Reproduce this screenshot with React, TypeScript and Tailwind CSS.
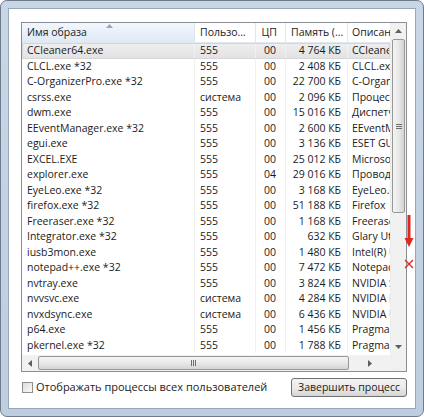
type Row = { name: string; user: string; cpu: string; mem: string; desc: string }

const ROWS: Row[] = [
  { name: 'CCleaner64.exe', user: '555', cpu: '00', mem: '4 764 КБ', desc: 'CCleaner' },
  { name: 'CLCL.exe *32', user: '555', cpu: '00', mem: '2 408 КБ', desc: 'CLCL.exe' },
  { name: 'C-OrganizerPro.exe *32', user: '555', cpu: '00', mem: '22 700 КБ', desc: 'C-Organizer Pro' },
  { name: 'csrss.exe', user: 'система', cpu: '00', mem: '2 096 КБ', desc: 'Процесс исполнения' },
  { name: 'dwm.exe', user: '555', cpu: '00', mem: '15 016 КБ', desc: 'Диспетчер окон' },
  { name: 'EEventManager.exe *32', user: '555', cpu: '00', mem: '2 600 КБ', desc: 'EEventManager' },
  { name: 'egui.exe', user: '555', cpu: '00', mem: '3 136 КБ', desc: 'ESET GUI' },
  { name: 'EXCEL.EXE', user: '555', cpu: '00', mem: '25 012 КБ', desc: 'Microsoft Excel' },
  { name: 'explorer.exe', user: '555', cpu: '04', mem: '29 016 КБ', desc: 'Проводник' },
  { name: 'EyeLeo.exe *32', user: '555', cpu: '00', mem: '3 168 КБ', desc: 'EyeLeo.exe' },
  { name: 'firefox.exe *32', user: '555', cpu: '00', mem: '51 188 КБ', desc: 'Firefox' },
  { name: 'Freeraser.exe *32', user: '555', cpu: '00', mem: '1 168 КБ', desc: 'Freeraser' },
  { name: 'Integrator.exe *32', user: '555', cpu: '00', mem: '632 КБ', desc: 'Glary Utilities' },
  { name: 'iusb3mon.exe', user: '555', cpu: '00', mem: '1 480 КБ', desc: 'Intel(R) USB 3.0' },
  { name: 'notepad++.exe *32', user: '555', cpu: '00', mem: '7 472 КБ', desc: 'Notepad++' },
  { name: 'nvtray.exe', user: '555', cpu: '00', mem: '3 824 КБ', desc: 'NVIDIA Settings' },
  { name: 'nvvsvc.exe', user: 'система', cpu: '00', mem: '4 284 КБ', desc: 'NVIDIA Driver' },
  { name: 'nvxdsync.exe', user: 'система', cpu: '00', mem: '6 436 КБ', desc: 'NVIDIA User' },
  { name: 'p64.exe', user: '555', cpu: '00', mem: '1 456 КБ', desc: 'Pragma' },
  { name: 'pkernel.exe *32', user: '555', cpu: '00', mem: '1 788 КБ', desc: 'Pragma' },
]

// column widths: name, user, cpu, mem, desc
const COLS = 'grid grid-cols-[173px_61px_30px_62px_42px]'

function Grip({ vertical }: { vertical?: boolean }) {
  return (
    <div className={vertical ? 'flex flex-col gap-[1px]' : 'flex gap-[1px]'}>
      {[0, 1, 2].map(i => (
        <span key={i} className={vertical ? 'block w-[6px] h-[1px] bg-[#6f6f6f]' : 'block w-[1px] h-[6px] bg-[#6f6f6f]'} />
      ))}
    </div>
  )
}

function Tri({ dir }: { dir: 'left' | 'right' | 'up' | 'down' }) {
  const d = {
    left: 'M4 0 L0 3.5 L4 7 Z',
    right: 'M0 0 L4 3.5 L0 7 Z',
    up: 'M0 4 L3.5 0 L7 4 Z',
    down: 'M0 0 L3.5 4 L7 0 Z',
  }[dir]
  const horiz = dir === 'left' || dir === 'right'
  return (
    <svg width={horiz ? 4 : 7} height={horiz ? 7 : 4} viewBox={horiz ? '0 0 4 7' : '0 0 7 4'}>
      <path d={d} fill="#5f5f5f" />
    </svg>
  )
}

export default function App() {
  return (
    <div className="w-[424px] h-[417px] bg-white" style={{ fontFamily: '"Open Sans", "Noto Sans", sans-serif' }}>
      <div className="relative w-[424px] h-[417px] rounded-[7px] border border-[#6d7b8c] bg-gradient-to-b from-[#c8d6e6] to-[#bfcedf] p-[7px]">
        <div className="h-full bg-white border border-[#97a6b8] pl-[12px] pr-[7px] pt-[13px] text-[10.5px] text-[#1b1b1b]">
          {/* list view */}
          <div className="w-[386px] h-[350px] border border-[#8a8f96] flex flex-col">
            <div className="flex flex-1 min-h-0">
              <div className="flex-1 min-w-0 overflow-hidden">
                {/* header */}
                <div className={`${COLS} h-[20px] border-b border-[#e3e8ee]`}>
                  <div className="relative flex items-center pl-[5px] bg-gradient-to-b from-[#f2f7fc] to-[#dfeaf6] border-r border-[#dbe3ec]">
                    Имя образа
                    <svg className="absolute left-[84px] top-[1px]" width="7" height="4" viewBox="0 0 7 4">
                      <path d="M0 4 L3.5 0 L7 4 Z" fill="#97a7bb" />
                    </svg>
                  </div>
                  <div className="flex items-center pl-[5px] border-r border-[#e5e5e5] whitespace-nowrap overflow-hidden">Пользо...</div>
                  <div className="flex items-center justify-end pr-[8px] border-r border-[#e5e5e5]">ЦП</div>
                  <div className="flex items-center pl-[5px] border-r border-[#e5e5e5] whitespace-nowrap overflow-hidden">Память (...</div>
                  <div className="flex items-center pl-[4px] whitespace-nowrap overflow-hidden">Описание</div>
                </div>
                {ROWS.map((r, i) => (
                  <div
                    key={r.name}
                    className={`${COLS} h-[15.5px] leading-[15px] ${i === 0 ? 'bg-gradient-to-b from-[#efefef] to-[#e2e2e2] outline outline-1 -outline-offset-1 outline-[#d6d6d6]' : ''}`}
                  >
                    <div className="pl-[5px] whitespace-nowrap overflow-hidden border-r border-[#f0f0f0]">{r.name}</div>
                    <div className="pl-[5px] whitespace-nowrap overflow-hidden border-r border-[#f0f0f0]">{r.user}</div>
                    <div className="text-right pr-[9px] border-r border-[#f0f0f0]">{r.cpu}</div>
                    <div className="text-right pr-[6px] whitespace-nowrap border-r border-[#f0f0f0]">{r.mem}</div>
                    <div className="pl-[4px] whitespace-nowrap overflow-hidden">{r.desc}</div>
                  </div>
                ))}
              </div>
              {/* vertical scrollbar */}
              <div className="w-[16px] flex flex-col bg-[#f1f1f1] border-l border-[#ececec]">
                <div className="h-[16px] flex items-center justify-center">
                  <Tri dir="up" />
                </div>
                <div className="h-[174px] mx-[1px] rounded-[2px] border border-[#979797] bg-gradient-to-r from-[#f4f4f4] via-[#e8e8e8] to-[#d4d4d4] flex items-center justify-center">
                  <Grip vertical />
                </div>
                <div className="flex-1" />
                <div className="h-[16px] flex items-center justify-center">
                  <Tri dir="down" />
                </div>
              </div>
            </div>
            {/* horizontal scrollbar */}
            <div className="h-[16px] flex bg-[#f1f1f1]">
              <div className="w-[16px] flex items-center justify-center">
                <Tri dir="left" />
              </div>
              <div className="w-[311px] my-[1px] rounded-[2px] border border-[#979797] bg-gradient-to-b from-[#f4f4f4] via-[#e8e8e8] to-[#d4d4d4] flex items-center justify-center">
                <Grip />
              </div>
              <div className="flex-1 flex items-center justify-center">
                <Tri dir="right" />
              </div>
              <div className="w-[16px] bg-[#f0f0f0]" />
            </div>
          </div>

          {/* bottom */}
          <div className="flex items-center justify-between mt-[6px] pr-[1px]">
            <label className="flex items-center gap-[3px] text-[11px] ml-[1px] text-[#222]">
              <span className="block w-[11px] h-[11px] border border-[#8f8f8f] bg-gradient-to-br from-[#dcdcdc] to-[#fbfbfb]" />
              Отображать процессы всех пользователей
            </label>
            <button className="w-[116px] h-[19px] rounded-[3px] border border-[#707070] bg-gradient-to-b from-[#f2f2f2] via-[#ebebeb] to-[#d5d5d5] text-[10.5px] text-[#1b1b1b] leading-none">
              Завершить процесс
            </button>
          </div>
        </div>

        {/* red annotation */}
        <div className="absolute left-[403px] top-[214px] flex flex-col items-center">
          <svg width="10" height="34" viewBox="0 0 10 34">
            <path d="M5 0 V26" stroke="#e0261f" strokeWidth="3" />
            <path d="M0.5 23 L5 32 L9.5 23 Z" fill="#e0261f" />
          </svg>
          <svg className="mt-[10px]" width="10" height="10" viewBox="0 0 10 10">
            <path d="M1 1 L9 9 M9 1 L1 9" stroke="#e0261f" strokeWidth="1.3" />
          </svg>
        </div>
      </div>
    </div>
  )
}
